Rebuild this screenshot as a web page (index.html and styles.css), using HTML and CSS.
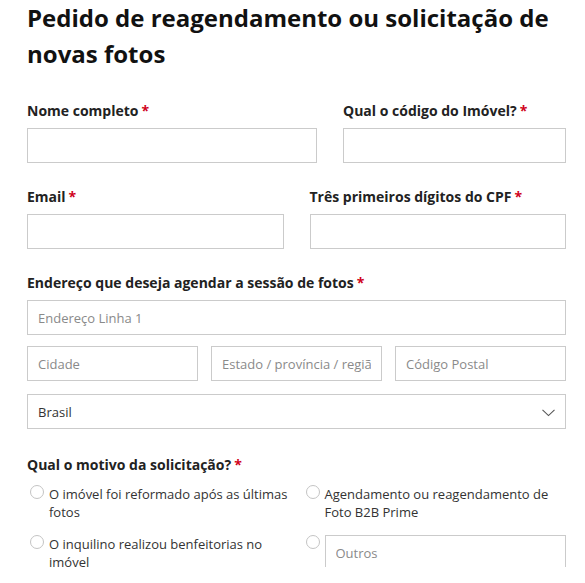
FILE: index.html
```html
<!DOCTYPE html>
<html lang="pt">
<head>
<meta charset="utf-8">
<title>Pedido de reagendamento</title>
<link rel="stylesheet" href="styles.css">
</head>
<body>
<div class="frame">
  <form class="form">
    <h1 class="title">Pedido de reagendamento ou solicitação de novas fotos</h1>

    <div class="row row-a">
      <div class="field">
        <label class="label">Nome completo<span class="req">*</span></label>
        <input class="input" type="text">
      </div>
      <div class="field">
        <label class="label">Qual o código do Imóvel?<span class="req">*</span></label>
        <input class="input" type="text">
      </div>
    </div>

    <div class="row row-b">
      <div class="field">
        <label class="label">Email<span class="req">*</span></label>
        <input class="input" type="text">
      </div>
      <div class="field">
        <label class="label">Três primeiros dígitos do CPF<span class="req">*</span></label>
        <input class="input" type="text">
      </div>
    </div>

    <div class="field address">
      <label class="label">Endereço que deseja agendar a sessão de fotos<span class="req">*</span></label>
      <input class="input" type="text" placeholder="Endereço Linha 1">
      <div class="triple">
        <input class="input" type="text" placeholder="Cidade">
        <input class="input" type="text" placeholder="Estado / província / região">
        <input class="input" type="text" placeholder="Código Postal">
      </div>
      <div class="select">
        <span>Brasil</span>
        <svg class="chev" width="13" height="8" viewBox="0 0 13 8"><path d="M0.5 0.8 L6.5 6.6 L12.5 0.8" fill="none" stroke="#555" stroke-width="1.1"/></svg>
      </div>
    </div>

    <div class="field reason">
      <label class="label">Qual o motivo da solicitação?<span class="req">*</span></label>
      <div class="options">
        <div class="option"><span class="radio"></span><span class="opt-text">O imóvel foi reformado após as últimas fotos</span></div>
        <div class="option"><span class="radio"></span><span class="opt-text">Agendamento ou reagendamento de Foto B2B Prime</span></div>
        <div class="option"><span class="radio"></span><span class="opt-text">O inquilino realizou benfeitorias no imóvel</span></div>
        <div class="option"><span class="radio"></span><input class="input other" type="text" placeholder="Outros"></div>
      </div>
    </div>
  </form>
</div>
</body>
</html>
```
FILE: styles.css
```css
html, body {
  margin: 0;
  padding: 0;
  background: #fff;
}
body {
  font-family: "Open Sans", "Noto Sans", sans-serif;
  color: #222;
}
.frame {
  height: 567px;
  overflow: hidden;
}
.form {
  width: 539px;
  padding-left: 27px;
}
.title {
  margin: 0;
  font-size: 24px;
  line-height: 36px;
  font-weight: 700;
  color: #111;
}
.row {
  display: grid;
  column-gap: 26px;
}
.row-a {
  grid-template-columns: 290px 1fr;
  margin-top: 29px;
}
.row-b {
  grid-template-columns: 1fr 1fr;
  margin-top: 24px;
}
.field {
  display: flex;
  flex-direction: column;
}
.label {
  font-size: 14px;
  line-height: 20px;
  font-weight: 700;
  color: #222;
  margin-bottom: 7px;
}
.req {
  color: #d0021b;
  margin-left: 3px;
}
.input {
  box-sizing: border-box;
  height: 35px;
  width: 100%;
  margin: 0;
  border: 1px solid #cbcbcb;
  border-radius: 0;
  background: #fff;
  padding: 0 10px;
  font-family: "Open Sans", "Noto Sans", sans-serif;
  font-size: 13px;
  color: #333;
  outline: none;
}
.input::placeholder {
  color: #8a8a8a;
  opacity: 1;
}
.address {
  margin-top: 24px;
}
.triple {
  display: grid;
  grid-template-columns: 1fr 1fr 1fr;
  column-gap: 13px;
  margin-top: 11px;
}
.select {
  box-sizing: border-box;
  height: 35px;
  margin-top: 13px;
  border: 1px solid #cbcbcb;
  display: flex;
  align-items: center;
  justify-content: space-between;
  padding: 0 10px 0 10px;
  font-size: 13px;
  color: #333;
}
.chev {
  display: block;
  margin-top: 2px;
}
.reason {
  margin-top: 26px;
}
.reason .label {
  margin-bottom: 10px;
}
.options {
  display: grid;
  grid-template-columns: 1fr 1fr;
  column-gap: 12px;
  row-gap: 14px;
}
.option {
  display: flex;
  align-items: flex-start;
  font-size: 13px;
  line-height: 18px;
  color: #333;
}
.radio {
  flex: none;
  box-sizing: border-box;
  width: 14px;
  height: 14px;
  border: 1px solid #c4c4c4;
  border-radius: 50%;
  background: #fff;
  margin: 0 5px 0 3px;
}
.opt-text {
  flex: 1;
}
.other {
  flex: 1;
  width: auto;
}
```
